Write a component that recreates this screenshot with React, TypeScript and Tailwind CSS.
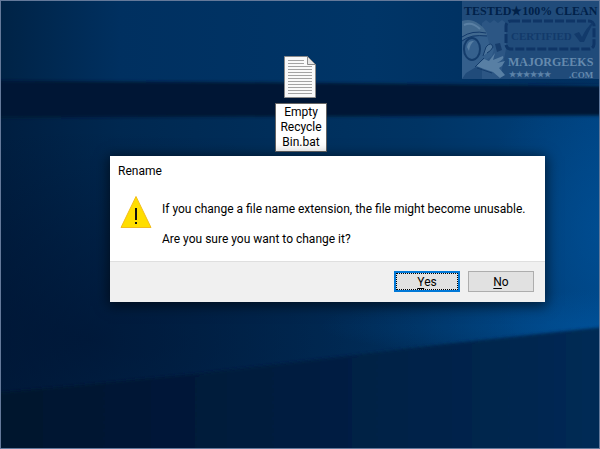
import { useState } from "react";

const Wallpaper = () => (
  <svg
    className="absolute inset-0 h-full w-full"
    viewBox="0 0 600 449"
    preserveAspectRatio="none"
    aria-hidden="true"
  >
    <defs>
      <linearGradient id="sky" x1="0" y1="0" x2="1" y2="0">
        <stop offset="0" stopColor="#002346" />
        <stop offset="0.2" stopColor="#003060" />
        <stop offset="0.62" stopColor="#003567" />
        <stop offset="1" stopColor="#002d5c" />
      </linearGradient>
      <linearGradient id="beam" x1="0" y1="0" x2="1" y2="0">
        <stop offset="0" stopColor="#001e40" />
        <stop offset="0.2" stopColor="#002850" />
        <stop offset="0.7" stopColor="#003464" />
        <stop offset="1" stopColor="#00427f" />
      </linearGradient>
      <linearGradient id="floor" x1="0" y1="0" x2="1" y2="0">
        <stop offset="0" stopColor="#00122c" />
        <stop offset="0.5" stopColor="#001d40" />
        <stop offset="1" stopColor="#002a55" />
      </linearGradient>
      <radialGradient id="shade">
        <stop offset="0" stopColor="#001230" stopOpacity="0.65" />
        <stop offset="1" stopColor="#001230" stopOpacity="0" />
      </radialGradient>
      <radialGradient id="glow">
        <stop offset="0" stopColor="#005aa8" stopOpacity="0.45" />
        <stop offset="1" stopColor="#005aa8" stopOpacity="0" />
      </radialGradient>
      <filter id="soft" x="-10%" y="-30%" width="120%" height="160%">
        <feGaussianBlur stdDeviation="1.5" />
      </filter>
    </defs>
    <rect width="600" height="449" fill="url(#beam)" />
    <rect width="600" height="84" fill="url(#sky)" />
    <ellipse cx="90" cy="340" rx="430" ry="210" fill="url(#shade)" />
    <ellipse cx="610" cy="230" rx="130" ry="170" fill="url(#glow)" />
    <ellipse cx="600" cy="326" rx="280" ry="34" fill="url(#glow)" />
    <path
      d="M-9 80L300 82L609 85V115L-9 117Z"
      fill="#001734"
      filter="url(#soft)"
    />
    <path
      d="M-9 394L100 384L200 374L300 362L450 344L609 327V460H-9Z"
      fill="url(#floor)"
      filter="url(#soft)"
    />
  </svg>
);

const FileIcon = () => (
  <svg width="34" height="42" viewBox="0 0 34 42" aria-hidden="true">
    <path d="M.5.5H23L31.500 9V41.500H.5Z" fill="#f9f9f9" stroke="#8b8b8b" />
    <path
      d="M4 4.500H20M4 7.500H20M4 10.500H28M4 13.500H28M4 16.500H28M4 19.500H28M4 22.500H28M4 25.500H28M4 28.500H28M4 31.500H28M4 34.500H28M4 37.500H28"
      stroke="#a3a3a3"
    />
    <path d="M23.500.5V8.500H31.500Z" fill="#e4e4e4" stroke="#8b8b8b" />
  </svg>
);

const WarningIcon = () => (
  <svg
    className="shrink-0"
    width="32"
    height="33"
    viewBox="0 0 32 33"
    aria-hidden="true"
  >
    <path d="M16 1.500L31 32.500H1Z" fill="#ffde00" stroke="#f3bd1c" />
    <path d="M15 13H17V25H15ZM15 27H17V29H15Z" fill="#111" />
  </svg>
);

const Badge = () => (
  <svg
    width="137"
    height="78"
    viewBox="0 0 137 78"
    fontFamily="'Liberation Serif', serif"
    fontWeight="700"
    role="img"
    aria-label="MajorGeeks certified"
  >
    <rect width="137" height="78" fill="#204b7a" />
    <text x="2" y="14" fontSize="12" fill="#002149">
      TESTED★100% CLEAN
    </text>
    <path
      d="M20 22L24 19L28 22L32 19L36 22L40 19L44 22V48L38 78H20Z"
      fill="#2c5684"
    />
    <rect
      x="44"
      y="20"
      width="88"
      height="28"
      rx="5"
      fill="none"
      stroke="#0f3566"
      strokeWidth="3"
      strokeDasharray="9 2"
    />
    <text x="49" y="39" fontSize="11" fill="#123a6b">
      CERTIFIED
    </text>
    <path
      d="M112 33L117 31L120 36Q124 27 132 20Q127 30 122 41H118Z"
      fill="#123a6b"
    />
    <path d="M0 36L25 34L27 42L32 48L30 55L24 59L14 66L4 72L0 78Z" fill="#345f8c" />
    <path d="M0 20Q9 17 17 23Q24 28 25 34L20 35Q9 33 0 39Z" fill="#41698f" />
    <path d="M2 24Q10 20 18 28" fill="none" stroke="#5a80a4" strokeWidth="2" />
    <path
      d="M0 40Q9 33 25 35M0 36Q10 29 24 32"
      fill="none"
      stroke="#12396a"
    />
    <ellipse
      cx="10"
      cy="48"
      rx="8"
      ry="11"
      fill="#35608d"
      stroke="#143c6b"
      strokeWidth="2"
    />
    <path d="M5 46Q6 39 12 40Q8 43 7 50Z" fill="#587fa4" />
    <path
      d="M21 55L24 46Q29 40 31 46Q29 50 25 52"
      fill="#4c749b"
      stroke="#143c6b"
    />
    <path d="M33 43L38 42L40 49L35 51Z" fill="#173d6c" />
    <path
      d="M14 65L22 58L27 60L33 52L31 59L41 55Q43 58 35 62L43 60L40 65L37 67L43 74L38 77L31 71L22 68Z"
      fill="#587fa4"
    />
    <path d="M13 66L22 57M15 67L30 72" stroke="#143c6b" />
    <text x="46" y="65" fontSize="12" fill="#658aae">
      MAJORGEEKS
    </text>
    <text x="47" y="76" fontSize="8" fill="#5c82a8">
      ★★★★★★
    </text>
    <text x="107" y="77" fontSize="9" fill="#658aae">
      .COM
    </text>
  </svg>
);

const RenameDialog = () => (
  <div
    role="alertdialog"
    aria-labelledby="title"
    aria-describedby="message"
    className="absolute left-[109px] top-[155px] w-[435px] bg-white text-black shadow-[0_2px_12px_2px_rgba(0,0,0,0.55)]"
  >
    <h1 id="title" className="px-2 py-1.5 leading-[18px]">
      Rename
    </h1>
    <div className="flex gap-2.5 px-2.5 pb-[13px] pt-[9px]">
      <WarningIcon />
      <div id="message" className="flex flex-col gap-3 pt-[5px] leading-[18px]">
        <p className="whitespace-nowrap">
          If you change a file name extension, the file might become unusable.
        </p>
        <p>Are you sure you want to change it?</p>
      </div>
    </div>
    <div className="flex justify-end gap-2 border-t border-[#dfdfdf] bg-[#f0f0f0] px-[11px] pb-[10px] pt-[9px]">
      <button className="h-[21px] w-[66px] border-2 border-[#0078d7] bg-[#e1e1e1]">
        <span className="flex h-full items-center justify-center border border-dotted border-black">
          <span>
            <u className="underline-offset-2">Y</u>es
          </span>
        </span>
      </button>
      <button className="h-[21px] w-[66px] border border-[#adadad] bg-[#e1e1e1]">
        <u className="underline-offset-2">N</u>o
      </button>
    </div>
  </div>
);

const App = () => {
  const [fileName, setFileName] = useState("Empty Recycle Bin.bat");

  return (
    <main className="relative min-h-screen overflow-hidden border border-[#64799a] font-[Roboto,sans-serif] text-[12px]">
      <Wallpaper />
      <div className="absolute left-[274px] top-[55px] flex w-[52px] flex-col items-center gap-[5px]">
        <FileIcon />
        <textarea
          aria-label="File name"
          rows={3}
          value={fileName}
          onChange={(event) => setFileName(event.target.value)}
          className="block w-full resize-none overflow-hidden border border-[#646464] bg-white px-0.5 py-px text-center leading-[15px] text-black outline-none"
        />
      </div>
      <div className="absolute right-0 top-0">
        <Badge />
      </div>
      <RenameDialog />
    </main>
  );
};

export default App;
